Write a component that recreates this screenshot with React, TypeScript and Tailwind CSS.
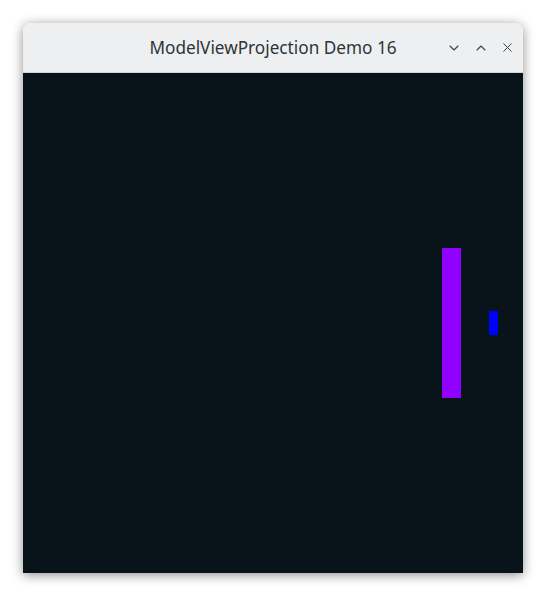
import { ChevronDown, ChevronUp, X } from 'lucide-react';

export default function App() {
    return (
        <div className="w-[546px] h-[596px] bg-white flex items-start justify-center pt-[23px]">
            <div className="w-[500px] flex flex-col rounded-t-[8px] shadow-[0_2px_12px_rgba(0,0,0,0.45)]">
                <div className="relative h-[50px] bg-[#eeeff1] rounded-t-[8px] border-b border-[#d6d6d8] flex items-center justify-center">
                    <span className="text-[17.2px] text-[#2e3436] font-['Noto_Sans',sans-serif]">
                        ModelViewProjection Demo 16
                    </span>
                    <div className="absolute right-[8px] top-0 h-full flex items-center gap-[11px] text-[#3d4144]">
                        <ChevronDown size={16} strokeWidth={1.6} />
                        <ChevronUp size={16} strokeWidth={1.6} />
                        <X size={15} strokeWidth={1.6} />
                    </div>
                </div>
                <div className="relative h-[500px] bg-[#09131a]">
                    <div className="absolute left-[419px] top-[175px] w-[19px] h-[150px] bg-[#8f00ff]" />
                    <div className="absolute left-[466px] top-[238px] w-[9px] h-[24px] bg-[#0000ff]" />
                </div>
            </div>
        </div>
    );
}
